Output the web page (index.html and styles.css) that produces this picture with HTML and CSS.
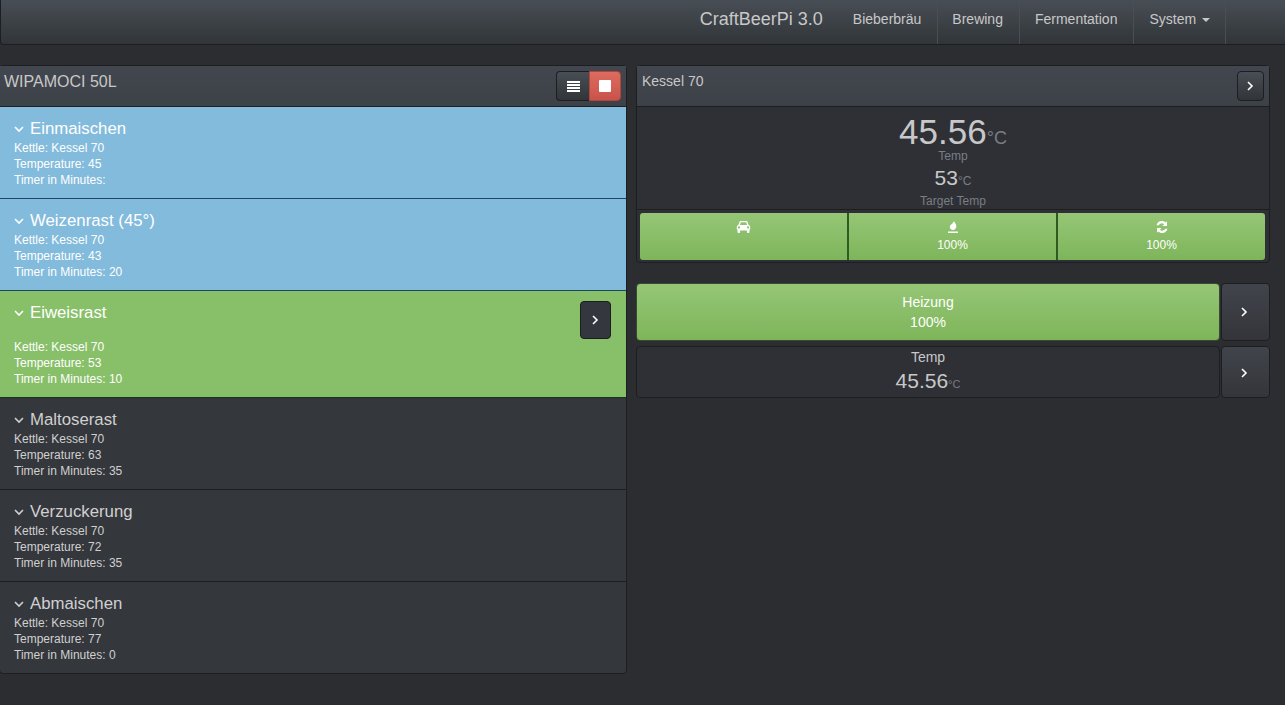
FILE: index.html
```html
<!DOCTYPE html>
<html lang="en">
<head>
<meta charset="utf-8">
<title>CraftBeerPi 3.0</title>
<link rel="stylesheet" href="styles.css">
</head>
<body>
<svg class="defs" width="0" height="0" aria-hidden="true">
  <symbol id="chev-down" viewBox="0 0 10 10"><path d="M1 3l4 4 4-4" fill="none" stroke="currentColor" stroke-width="1.6"/></symbol>
  <symbol id="chev-right" viewBox="0 0 10 10"><path d="M3 1l4 4-4 4" fill="none" stroke="currentColor" stroke-width="1.6"/></symbol>
</svg>
<nav class="navbar">
  <a class="brand">CraftBeerPi 3.0</a>
  <ul class="nav">
    <li class="nav-item">Bieberbräu</li>
    <li class="nav-item nav-item-tight">Brewing</li>
    <li class="nav-item">Fermentation</li>
    <li class="nav-item nav-item-last">System <span class="caret"></span></li>
  </ul>
</nav>
<main class="layout">
  <section class="panel steps-panel">
    <header class="panel-head steps-head">
      <span class="steps-title">WIPAMOCI 50L</span>
      <div class="btn-group">
        <button class="btn btn-dark btn-list"><svg width="13" height="11" viewBox="0 0 13 11"><path d="M0 0h13v2H0zM0 3h13v2H0zM0 6h13v2H0zM0 9h13v2H0z" fill="#fff"/></svg></button>
        <button class="btn btn-red"><span class="stop"></span></button>
      </div>
    </header>
    <article class="step step-blue">
      <h4 class="step-title"><svg class="chev"><use href="#chev-down"/></svg>Einmaischen</h4>
      <p class="step-line">Kettle: Kessel 70</p><p class="step-line">Temperature: 45</p><p class="step-line">Timer in Minutes:</p>
    </article>
    <article class="step step-blue">
      <h4 class="step-title"><svg class="chev"><use href="#chev-down"/></svg>Weizenrast (45°)</h4>
      <p class="step-line">Kettle: Kessel 70</p><p class="step-line">Temperature: 43</p><p class="step-line">Timer in Minutes: 20</p>
    </article>
    <article class="step step-green">
      <div class="step-top">
        <h4 class="step-title"><svg class="chev"><use href="#chev-down"/></svg>Eiweisrast</h4>
        <button class="btn btn-dark btn-next"><svg class="arrow"><use href="#chev-right"/></svg></button>
      </div>
      <p class="step-line">Kettle: Kessel 70</p><p class="step-line">Temperature: 53</p><p class="step-line">Timer in Minutes: 10</p>
    </article>
    <article class="step">
      <h4 class="step-title"><svg class="chev"><use href="#chev-down"/></svg>Maltoserast</h4>
      <p class="step-line">Kettle: Kessel 70</p><p class="step-line">Temperature: 63</p><p class="step-line">Timer in Minutes: 35</p>
    </article>
    <article class="step">
      <h4 class="step-title"><svg class="chev"><use href="#chev-down"/></svg>Verzuckerung</h4>
      <p class="step-line">Kettle: Kessel 70</p><p class="step-line">Temperature: 72</p><p class="step-line">Timer in Minutes: 35</p>
    </article>
    <article class="step step-last">
      <h4 class="step-title"><svg class="chev"><use href="#chev-down"/></svg>Abmaischen</h4>
      <p class="step-line">Kettle: Kessel 70</p><p class="step-line">Temperature: 77</p><p class="step-line">Timer in Minutes: 0</p>
    </article>
  </section>
  <div class="side">
    <section class="panel kettle">
      <header class="panel-head kettle-head">
        <span class="kettle-title">Kessel 70</span>
        <button class="btn btn-dark btn-small"><svg class="arrow"><use href="#chev-right"/></svg></button>
      </header>
      <div class="readout">
        <div class="big">45.56<span class="big-unit">°C</span></div>
        <div class="label label-temp">Temp</div>
        <div class="mid">53<span class="mid-unit">°C</span></div>
        <div class="label">Target Temp</div>
      </div>
      <div class="kettle-actions">
        <div class="act act-green">
          <svg class="ico" width="15" height="12" viewBox="0 0 15 12"><path fill="#fff" d="M3.6.6C3.8.2 4.2 0 4.6 0h5.8c.4 0 .8.2 1 .6L12.6 4c.9.2 1.6 1 1.6 2v2.600H13.500V11a1 1 0 0 1-1 1h-.6a1 1 0 0 1-1-1V9.500H4.100V11a1 1 0 0 1-1 1h-.6a1 1 0 0 1-1-1V8.600H.8V6c0-1 .7-1.800 1.600-2zM4.800 1.300L4 4h7l-.8-2.700zM3 5.300a1.100 1.100 0 1 0 0 2.200 1.100 1.100 0 0 0 0-2.200zm9 0a1.100 1.100 0 1 0 0 2.200 1.100 1.100 0 0 0 0-2.200z"/></svg>
        </div>
        <div class="act act-green">
          <svg class="ico" width="12" height="12" viewBox="0 0 12 12"><path fill="#fff" d="M7 0C7.500 2 9.500 3 9.300 5.500 9.200 7.500 7.700 9 6 9 4 9 2.700 7.500 2.800 5.800 3 3.500 6 3 7 0zM1 10.500h10V12H1z"/></svg>
          <span class="pct">100%</span>
        </div>
        <div class="act act-green">
          <svg class="ico" width="12" height="12" viewBox="0 0 12 12"><path fill="#fff" d="M6 0c1.500 0 2.800.6 3.700 1.500L11 .3V5H6.400l1.700-1.800A3.400 3.400 0 0 0 2.800 4.200H.5A5.600 5.600 0 0 1 6 0zM1 7h4.600l-1.700 1.800a3.400 3.400 0 0 0 5.300-1h2.300A5.600 5.600 0 0 1 6 12c-1.500 0-2.800-.6-3.700-1.500L1 11.700z"/></svg>
          <span class="pct">100%</span>
        </div>
      </div>
    </section>
    <div class="row actor-row">
      <div class="row-main act-green actor"><span>Heizung</span><span>100%</span></div>
      <button class="btn btn-dark row-next"><svg class="arrow"><use href="#chev-right"/></svg></button>
    </div>
    <div class="row sensor-row">
      <div class="row-main sensor"><span class="sensor-name">Temp</span><span class="sensor-val">45.56<span class="sensor-unit">°C</span></span></div>
      <button class="btn btn-dark row-next row-next-low"><svg class="arrow"><use href="#chev-right"/></svg></button>
    </div>
  </div>
</main>
</body>
</html>
```
FILE: styles.css
```css
* { box-sizing: border-box; }
html, body { height: 100%; }
body {
  margin: 0;
  background: #2b2d31;
  color: #c8c8c8;
  font-family: "Liberation Sans", Arial, sans-serif;
  font-size: 14px;
  overflow: hidden;
}
.defs { display: block; height: 0; }
.navbar {
  height: 45px;
  display: flex;
  justify-content: flex-end;
  align-items: stretch;
  padding-right: 59px;
  background: linear-gradient(#484e55, #3a3f44 60%, #313539);
  border: 1px solid #1c1e22;
  border-width: 0 0 1px 1px;
  border-radius: 0 0 0 4px;
}
.brand { font-size: 18px; line-height: 38px; color: #c8c8c8; margin-right: 15px; }
.nav { list-style: none; display: flex; margin: 0; padding: 0; }
.nav-item {
  padding: 0 16px 0 15px;
  line-height: 38px;
  color: #c8c8c8;
  border-right: 1px solid #4a4f55;
}
.nav-item-tight { padding-left: 14px; }
.nav-item-last { padding-right: 15px; }
.caret {
  display: inline-block;
  width: 0; height: 0;
  margin-left: 2px;
  vertical-align: middle;
  border-top: 4px solid #c8c8c8;
  border-left: 4px solid transparent;
  border-right: 4px solid transparent;
}
.layout { display: flex; align-items: flex-start; padding-top: 20px; }
.panel {
  background: #2e3036;
  border: 1px solid #1c1e22;
  border-radius: 4px;
}
.panel-head {
  height: 41px;
  display: flex;
  justify-content: space-between;
  background: linear-gradient(#42464e, #3d4148);
  border-bottom: 1px solid #1c1e22;
}
.steps-panel { width: 628px; margin-left: -1px; flex: none; }
.steps-head { padding: 5px 5px 0 4px; }
.steps-title { font-size: 16px; line-height: 22px; color: #c8c8c8; }
.btn {
  border: 1px solid #1c1e22;
  border-radius: 4px;
  padding: 0;
  color: #fff;
  display: flex;
  align-items: center;
  justify-content: center;
  font: inherit;
}
.btn-dark { background: linear-gradient(#484e55, #3a3f44 60%, #313539); }
.btn-group { display: flex; height: 30px; }
.btn-list { width: 33px; border-radius: 4px 0 0 4px; border-right: 0; }
.btn-red {
  width: 32px;
  border-radius: 0 4px 4px 0;
  border-color: #b1453a;
  background: linear-gradient(#dd6b60, #c9534a);
}
.stop { display: block; width: 12px; height: 12px; background: #fff; border-radius: 1px; }
.step {
  height: 92px;
  padding: 12px 15px 0 14px;
  background: #34373c;
  border-bottom: 1px solid #1c1e22;
  color: #d0d0d0;
}
.step-blue { background: #83bbdc; color: #fff; border-bottom-color: #1d4664; }
.step-green { height: 107px; background: #88bf69; color: #fff; border-bottom-color: #16351a; }
.step-last { height: 91px; border-bottom: 0; border-radius: 0 0 4px 4px; }
.step-title {
  margin: 0;
  font-size: 16.8px;
  font-weight: 400;
  line-height: 20px;
  display: flex;
  align-items: center;
}
.step-line { margin: 0; font-size: 12px; line-height: 16px; }
.step-title + .step-line { margin-top: 1px; }
.step-top { height: 35px; margin-bottom: 1px; display: flex; justify-content: space-between; align-items: flex-start; }
.chev { width: 10px; height: 10px; margin: 0 6px 0 0; flex: none; }
.arrow { width: 10px; height: 10px; }
.btn-next { width: 31px; height: 38px; margin-top: -2px; padding-right: 2px; background: #34373d; }
.side { width: 634px; margin-left: 9px; flex: none; }
.kettle-head { padding: 4px 5px 0 5px; }
.kettle-title { line-height: 22px; }
.btn-small { width: 27px; height: 30px; margin-top: 1px; padding-right: 2px; }
.kettle { height: 198px; }
.readout {
  height: 103px;
  text-align: center;
  padding-top: 7px;
  border-bottom: 1px solid #1c1e22;
  overflow: hidden;
}
.big { font-size: 35px; line-height: 35px; color: #c8c8c8; }
.big-unit { font-size: 18px; color: #7a7d83; }
.label { font-size: 12px; line-height: 14px; color: #7a7d83; }
.label-temp { margin-top: -7px; }
.mid { font-size: 21px; line-height: 24px; margin-top: 3px; color: #c8c8c8; }
.mid-unit { font-size: 12px; color: #7a7d83; }
.mid + .label { margin-top: 1px; }
.kettle-actions { display: flex; padding: 3px 4px 0 3px; }
.act-green {
  background: linear-gradient(#95c676, #7eb55a);
  color: #fff;
}
.act {
  flex: 1;
  height: 47px;
  display: flex;
  flex-direction: column;
  align-items: center;
  padding-top: 8px;
  font-size: 12px;
  border-right: 2px solid #2f5a22;
}
.act:last-child { border-right: 0; border-radius: 0 3px 3px 0; }
.act:first-child { border-radius: 3px 0 0 3px; }
.ico { flex: none; }
.pct { margin-top: 5px; line-height: 14px; }
.row { display: flex; gap: 1px; }
.actor-row { margin-top: 20px; height: 58px; }
.sensor-row { margin-top: 5px; height: 52px; }
.row-main {
  width: 584px;
  display: flex;
  flex-direction: column;
  align-items: center;
  border-radius: 4px;
  border: 1px solid #1c1e22;
}
.actor { padding-top: 8px; line-height: 20px; color: #fff; border-color: #3a4a32; }
.sensor { background: #2e3036; padding-top: 1px; }
.sensor-name { line-height: 18px; }
.sensor-val { font-size: 21px; line-height: 29px; }
.sensor-unit { font-size: 11px; color: #7a7d83; }
.row-next { flex: 1; padding-right: 3px; background: linear-gradient(#42444c, #33353a); }
.row-next-low { padding-top: 2px; }
```
